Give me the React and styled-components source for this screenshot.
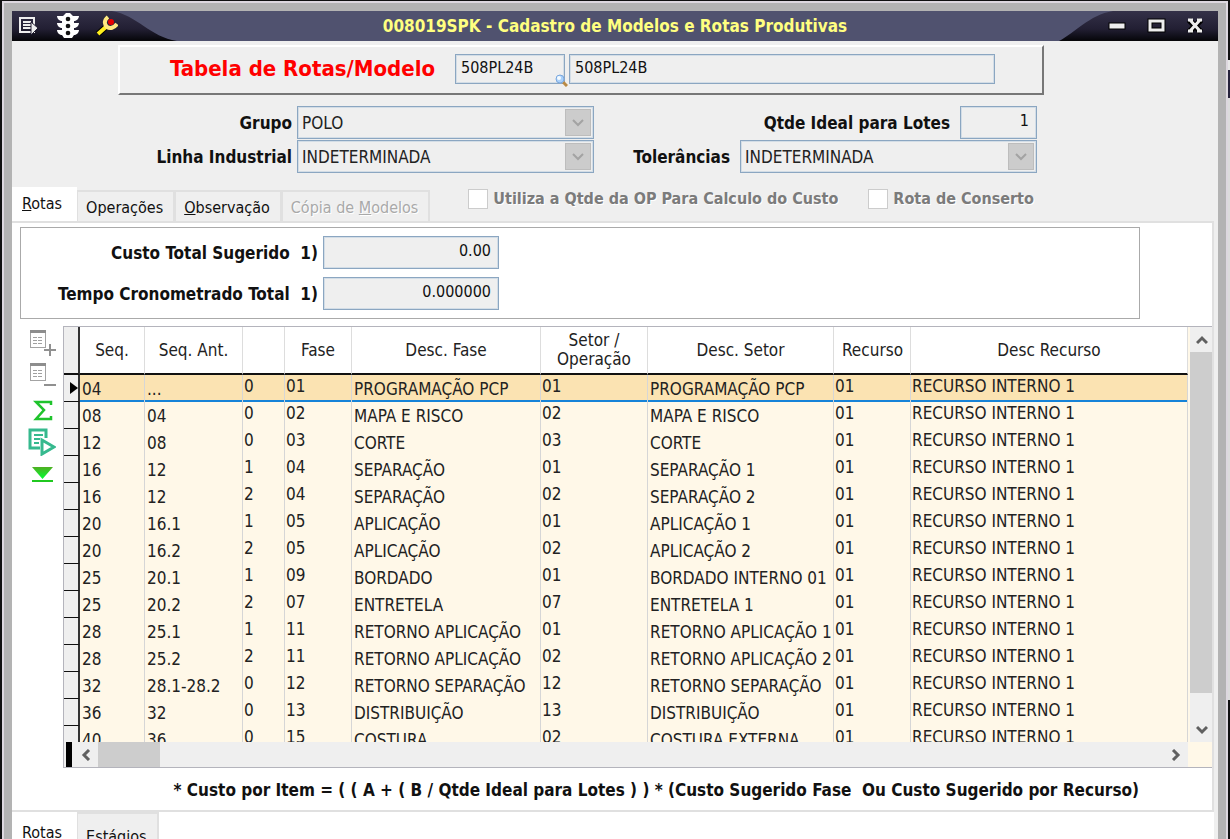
import styled, { createGlobalStyle, css } from "styled-components";

const FONT = `"DejaVu Sans Condensed", "DejaVu Sans", Tahoma, sans-serif`;

const columns = [
  { key: "seq", title: "Seq.", width: 65, low: true },
  { key: "ant", title: "Seq. Ant.", width: 98, low: true },
  { key: "alt", title: "", width: 42 },
  { key: "fase", title: "Fase", width: 67 },
  { key: "descFase", title: "Desc. Fase", width: 189, low: true },
  { key: "setor", title: "Setor / Operação", width: 107 },
  { key: "descSetor", title: "Desc. Setor", width: 186, low: true },
  { key: "recurso", title: "Recurso", width: 77 },
  { key: "descRecurso", title: "Desc Recurso" },
];

const rows = [
  ["04", "...", "0", "01", "PROGRAMAÇÃO PCP", "01", "PROGRAMAÇÃO PCP"],
  ["08", "04", "0", "02", "MAPA E RISCO", "02", "MAPA E RISCO"],
  ["12", "08", "0", "03", "CORTE", "03", "CORTE"],
  ["16", "12", "1", "04", "SEPARAÇÃO", "01", "SEPARAÇÃO 1"],
  ["16", "12", "2", "04", "SEPARAÇÃO", "02", "SEPARAÇÃO 2"],
  ["20", "16.1", "1", "05", "APLICAÇÃO", "01", "APLICAÇÃO 1"],
  ["20", "16.2", "2", "05", "APLICAÇÃO", "02", "APLICAÇÃO 2"],
  ["25", "20.1", "1", "09", "BORDADO", "01", "BORDADO INTERNO 01"],
  ["25", "20.2", "2", "07", "ENTRETELA", "07", "ENTRETELA 1"],
  ["28", "25.1", "1", "11", "RETORNO APLICAÇÃO", "01", "RETORNO APLICAÇÃO 1"],
  ["28", "25.2", "2", "11", "RETORNO APLICAÇÃO", "02", "RETORNO APLICAÇÃO 2"],
  ["32", "28.1-28.2", "0", "12", "RETORNO SEPARAÇÃO", "12", "RETORNO SEPARAÇÃO"],
  ["36", "32", "0", "13", "DISTRIBUIÇÃO", "13", "DISTRIBUIÇÃO"],
  ["40", "36", "0", "15", "COSTURA", "02", "COSTURA EXTERNA"],
].map((row) => [...row, "01", "RECURSO INTERNO 1"]);

const App = () => {
  return (
    <>
      <GlobalStyle />
      <Desktop>
        <Window>
          <TitleBar>
            <TitleTools>
              <TitleButton aria-label="Menu"><MenuIcon /></TitleButton>
              <TitleButton aria-label="Semáforo"><TrafficIcon /></TitleButton>
              <TitleButton aria-label="Ferramentas"><WrenchIcon /></TitleButton>
            </TitleTools>
            <Title>008019SPK - Cadastro de Modelos e Rotas Produtivas</Title>
            <WindowControls>
              <TitleButton aria-label="Minimizar">
                <svg width="20" height="20"><rect x="2" y="7" width="16" height="6" fill="#eee" stroke="#000" /></svg>
              </TitleButton>
              <TitleButton aria-label="Maximizar">
                <svg width="20" height="20">
                  <rect x="4" y="5" width="13" height="9" fill="none" stroke="#000" strokeWidth="5" />
                  <rect x="4" y="5" width="13" height="9" fill="none" stroke="#eee" strokeWidth="3" />
                </svg>
              </TitleButton>
              <TitleButton aria-label="Fechar">
                <svg width="20" height="20">
                  <path d="M4 4L16 16M16 4L4 16" stroke="#000" strokeWidth="6" />
                  <path d="M5 4L15 15M15 4L5 15M3 4H8M12 4H17M3 15H8M12 15H17" stroke="#eee" strokeWidth="3" />
                </svg>
              </TitleButton>
            </WindowControls>
          </TitleBar>

          <ModelPanel>
            <ModelLabel htmlFor="modelo">Tabela de Rotas/Modelo</ModelLabel>
            <Lookup>
              <Field id="modelo" $width={110} $height={30} defaultValue="508PL24B" readOnly />
              <LookupButton aria-label="Pesquisar"><SearchIcon /></LookupButton>
            </Lookup>
            <Field aria-label="Descrição do modelo" $width={426} $height={30} defaultValue="508PL24B" readOnly />
          </ModelPanel>

          <Form>
            <FormRow>
              <FieldLabel htmlFor="grupo" $width={280}>Grupo</FieldLabel>
              <DropDown id="grupo" value="POLO" />
              <RightGroup>
                <FieldLabel htmlFor="qtde">Qtde Ideal para Lotes</FieldLabel>
                <Field id="qtde" $width={77} $height={33} $right defaultValue="1" readOnly />
              </RightGroup>
            </FormRow>
            <FormRow>
              <FieldLabel htmlFor="linha" $width={280}>Linha Industrial</FieldLabel>
              <DropDown id="linha" value="INDETERMINADA" />
              <RightGroup>
                <FieldLabel htmlFor="tolerancias">Tolerâncias</FieldLabel>
                <DropDown id="tolerancias" value="INDETERMINADA" />
              </RightGroup>
            </FormRow>
          </Form>

          <TabStrip>
            <Tab $active><u>R</u>otas</Tab>
            <Tab>Operações</Tab>
            <Tab><u>O</u>bservação</Tab>
            <Tab disabled>Cópia de <u>M</u>odelos</Tab>
            <Options>
              <Option>
                <CheckBox type="checkbox" disabled />
                Utiliza a Qtde da OP Para Calculo do Custo
              </Option>
              <Option>
                <CheckBox type="checkbox" disabled />
                Rota de Conserto
              </Option>
            </Options>
          </TabStrip>

          <TabPage>
            <Totals>
              <FormRow>
                <FieldLabel htmlFor="custo" $width={297}>Custo Total Sugerido&nbsp; 1)</FieldLabel>
                <Field id="custo" $width={176} $height={33} $right defaultValue="0.00" readOnly />
              </FormRow>
              <FormRow>
                <FieldLabel htmlFor="tempo" $width={297}>Tempo Cronometrado Total&nbsp; 1)</FieldLabel>
                <Field id="tempo" $width={176} $height={33} $right defaultValue="0.000000" readOnly />
              </FormRow>
            </Totals>
            <Workspace>
              <SideBar>
                <SideButton aria-label="Incluir"><SheetIcon add /></SideButton>
                <SideButton aria-label="Excluir"><SheetIcon /></SideButton>
                <SideButton aria-label="Totalizar"><SumIcon /></SideButton>
                <SideButton aria-label="Executar"><RunIcon /></SideButton>
                <SideButton aria-label="Baixar"><DownIcon /></SideButton>
              </SideBar>
              <GridBox>
                <GridView>
                  <Table>
                    <colgroup>
                      <col width="16" />
                      {columns.map((c) => <col key={c.key} width={c.width} />)}
                    </colgroup>
                    <thead>
                      <tr>
                        <Gutter $head />
                        {columns.map((c) => <HeadCell key={c.key}>{c.title}</HeadCell>)}
                      </tr>
                    </thead>
                    <tbody>
                      {rows.map((row, i) => (
                        <Row key={i} $selected={i === 0}>
                          <Gutter>{i === 0 && <MarkerIcon />}</Gutter>
                          {row.map((text, j) => (
                            <Cell key={columns[j].key} $low={columns[j].low}>{text}</Cell>
                          ))}
                        </Row>
                      ))}
                    </tbody>
                  </Table>
                </GridView>
                <VScroll>
                  <ScrollButton aria-label="Subir"><Chevron d="M1 9L6 4L11 9" /></ScrollButton>
                  <VThumb />
                  <ScrollButton aria-label="Descer"><Chevron d="M1 3L6 8L11 3" /></ScrollButton>
                </VScroll>
                <HScroll>
                  <Splitter />
                  <ScrollButton aria-label="Esquerda"><Chevron d="M9 1L4 6L9 11" /></ScrollButton>
                  <HThumb />
                  <ScrollButton aria-label="Direita"><Chevron d="M3 1L8 6L3 11" /></ScrollButton>
                </HScroll>
              </GridBox>
            </Workspace>
            <Formula>
              * Custo por Item = ( ( A + ( B / Qtde Ideal para Lotes ) ) * (Custo Sugerido Fase&nbsp; Ou Custo Sugerido por Recurso)
            </Formula>
          </TabPage>

          <BottomTabs>
            <Tab $active $tall>Rotas</Tab>
            <Tab $tall>Estágios</Tab>
          </BottomTabs>
        </Window>
      </Desktop>
    </>
  );
};

export default App;

const DropDown = ({ id, value }) => (
  <SelectBox>
    <Select id={id} disabled defaultValue={value}>
      <option>{value}</option>
    </Select>
    <SelectArrow>
      <svg width="14" height="10"><path d="M2 2L7 7L12 2" fill="none" stroke="#a3a3a3" strokeWidth="2" /></svg>
    </SelectArrow>
  </SelectBox>
);

const Chevron = ({ d }) => (
  <svg width="12" height="12"><path d={d} fill="none" stroke="#606060" strokeWidth="3" /></svg>
);

const MenuIcon = () => (
  <svg width="22" height="22" viewBox="0 0 22 22">
    <rect x="2" y="3" width="14" height="14" fill="none" stroke="#eee" strokeWidth="2" />
    <path d="M5 7H13M5 10H13M5 13H13" stroke="#eee" strokeWidth="2" />
    <path d="M13 7L20 13L13 20Z" fill="#eee" stroke="#221f33" />
  </svg>
);

const TrafficIcon = () => (
  <svg width="24" height="26" viewBox="0 0 24 26">
    <path
      d="M7 3L10 0H14L17 3H23C23 6 20 8 18 8V10H23C23 13 20 15 18 15V17H23C23 20 20 22 18 22L16 25H8L6 22C4 22 1 20 1 17H6V15C4 15 1 13 1 10H6V8C4 8 1 6 1 3Z"
      fill="#fff"
    />
    <circle cx="12" cy="6" r="2.3" fill="#111" />
    <circle cx="12" cy="13" r="2.3" fill="#111" />
    <circle cx="12" cy="20" r="2.3" fill="#111" />
  </svg>
);

const WrenchIcon = () => (
  <svg width="22" height="22" viewBox="0 0 22 22">
    <path d="M2 19L11 11" stroke="#000" strokeWidth="6" />
    <path d="M2 19L11 11" stroke="#ffef1c" strokeWidth="4" />
    <path d="M12 2C8 5 8 9 11 12C14 14 18 13 21 9" fill="none" stroke="#ffe980" strokeWidth="4" />
    <circle cx="15" cy="7" r="3" fill="#e80000" />
  </svg>
);

const SearchIcon = () => (
  <svg width="13" height="13" viewBox="0 0 13 13">
    <path d="M8 8L12 12" stroke="#b98a45" strokeWidth="3" />
    <circle cx="5" cy="5" r="4" fill="#a9d0fa" stroke="#7aa7dd" />
    <circle cx="4" cy="4" r="2" fill="#f4fbff" />
  </svg>
);

const SheetIcon = ({ add }) => (
  <svg width="28" height="28" viewBox="0 0 28 28">
    <rect x="2.5" y="1.5" width="15" height="17" fill="#fff" stroke="#a3a3a3" />
    <path d="M2 2.5H18" stroke="#8d8d8d" strokeWidth="3" />
    <path d="M5 8.5H15M5 11.5H15M5 14.5H15" stroke="#a0a0a0" strokeDasharray="4 1" />
    <path d={add ? "M16 21H28M22 15V27" : "M16 23H28"} stroke="#909090" strokeWidth="2" />
  </svg>
);

const SumIcon = () => (
  <svg width="28" height="28" viewBox="0 0 28 28">
    <path d="M23 10V7H8L16 15L8 24H23V21" fill="none" stroke="#1fc32c" strokeWidth="2.5" />
  </svg>
);

const RunIcon = () => (
  <svg width="28" height="28" viewBox="0 0 28 28">
    <path d="M12 20H2V2H18V10" fill="none" stroke="#36b98e" strokeWidth="3" />
    <path d="M6 7H15M6 11H12M6 15H11" stroke="#36b98e" strokeWidth="2" />
    <path d="M14 12L26 19L14 26Z" fill="#fff" stroke="#36b98e" strokeWidth="3" />
  </svg>
);

const DownIcon = () => (
  <svg width="28" height="28" viewBox="0 0 28 28">
    <defs>
      <linearGradient id="down" x2="0" y2="1">
        <stop offset="0" stopColor="#4fae22" />
        <stop offset="1" stopColor="#00ff30" />
      </linearGradient>
    </defs>
    <path d="M4 6H25L14.5 18Z" fill="url(#down)" />
    <path d="M4 20H25" stroke="#20c820" strokeWidth="2" />
  </svg>
);

const MarkerIcon = () => (
  <svg width="8" height="12"><path d="M0 0L8 6L0 12Z" fill="#000" /></svg>
);

const GlobalStyle = createGlobalStyle`
  *, *::before, *::after { box-sizing: border-box; }
  body {
    margin: 0;
    overflow: hidden;
    background: #555;
    color: #111;
    font: 16px/20px ${FONT};
  }
  button, input, select { font: inherit; color: inherit; }
  button { padding: 0; border: 0; background: none; }
  svg { display: block; }
`;

const Desktop = styled.div`
  display: flex;
  height: 100vh;
  overflow: hidden;
  padding: 1px 3px 0 1px;
  background:
    linear-gradient(#111, #111) left / 50% 100% no-repeat,
    linear-gradient(#111 60px, #e8e8e8 60px, #e8e8e8 70px, #26233c 70px, #26233c 98px, #dcdcdc 98px, #dcdcdc 700px, #111 700px);
`;

const Window = styled.main`
  flex: 1;
  display: flex;
  flex-direction: column;
  min-width: 0;
  border: 8px solid #b3b3b3;
  border-bottom: 0;
  background: #efefef;
  outline: 2px solid #ddd8df;
  margin: 2px 1px 0 3px;

  > * {
    flex-shrink: 0;
  }
`;

const TitleBar = styled.header`
  display: flex;
  align-items: stretch;
  justify-content: space-between;
  height: 30px;
  background: #50526f;
`;

const TitleTools = styled.div`
  display: flex;
  align-items: center;
  gap: 16px;
  width: 165px;
  padding-left: 6px;
  background: linear-gradient(#343148, #221f33 60%, #050508);
  clip-path: path("M0 0H100C125 4 138 26 165 30H0Z");
`;

const WindowControls = styled.div`
  display: flex;
  align-items: center;
  justify-content: flex-end;
  gap: 19px;
  width: 165px;
  padding-right: 13px;
  background: linear-gradient(#343148, #221f33 60%, #050508);
  clip-path: path("M165 0H60C36 4 22 22 6 30H165Z");
`;

const TitleButton = styled.button`
  flex-shrink: 0;
`;

const Title = styled.h1`
  margin: 0;
  color: #ffff80;
  font-size: 17px;
  line-height: 30px;
`;

const ModelPanel = styled.section`
  display: flex;
  align-items: center;
  gap: 4px;
  width: 926px;
  height: 50px;
  margin: 4px 0 0 106px;
  padding: 0 0 2px 50px;
  border: 2px solid #fff;
  border-right-color: #777;
  border-bottom-color: #777;
`;

const ModelLabel = styled.label`
  width: 281px;
  color: #f00;
  font-size: 22px;
  font-weight: bold;
`;

const Lookup = styled.div`
  position: relative;
`;

const LookupButton = styled.button`
  position: absolute;
  right: -3px;
  bottom: -3px;
`;

const sunken = css`
  border: 1px solid #8ba6c1;
  border-radius: 0;
  background: #efefef;
  box-shadow: inset 0 0 0 1px #d3dde6;
`;

const Field = styled.input`
  display: block;
  width: ${(p) => p.$width}px;
  height: ${(p) => p.$height}px;
  padding: 0 7px 4px 5px;
  ${sunken}
  text-align: ${(p) => (p.$right ? "right" : "left")};
  outline: none;
`;

const Form = styled.section`
  display: flex;
  flex-direction: column;
  gap: 1px;
  width: 1025px;
  margin-top: 11px;
`;

const FormRow = styled.div`
  display: flex;
  align-items: center;
  gap: 5px;
`;

const RightGroup = styled.div`
  display: flex;
  flex: 1;
  align-items: center;
  justify-content: flex-end;
  gap: 10px;
`;

const FieldLabel = styled.label`
  width: ${(p) => (p.$width ? p.$width + "px" : "auto")};
  font-size: 17px;
  font-weight: bold;
  text-align: right;
`;

const SelectBox = styled.div`
  position: relative;
  width: 297px;
`;

const Select = styled.select`
  display: block;
  width: 100%;
  height: 33px;
  padding: 0 30px 0 4px;
  ${sunken}
  color: #222;
  font-size: 17px;
  opacity: 1;
  appearance: none;
`;

const SelectArrow = styled.span`
  position: absolute;
  top: 3px;
  right: 3px;
  display: grid;
  place-items: center;
  width: 26px;
  height: 27px;
  border: 1px solid #bdbdbd;
  background: #ccc;
  pointer-events: none;
`;

const TabStrip = styled.nav`
  display: flex;
  align-items: flex-end;
  height: 34px;
  margin-top: 14px;
`;

const Tab = styled.button`
  height: ${(p) => (p.$tall ? 46 : 31)}px;
  padding: 2px 10px 0 8px;
  border: 2px solid #e0e0e0;
  border-left-width: 1px;
  border-bottom: 0;
  background: #efefef;
  white-space: nowrap;

  &:disabled {
    color: #a9a9a9;
    text-shadow: 1px 1px 0 #fff;
  }

  ${(p) =>
    p.$active &&
    css`
      height: ${p.$tall ? 46 : 34}px;
      padding: 0 13px ${p.$tall ? 6 : 2}px 9px;
      border-color: #fff;
      background: #fff;
    `}
`;

const Options = styled.div`
  display: flex;
  align-self: flex-start;
  gap: 30px;
  margin-left: 38px;
`;

const Option = styled.label`
  display: flex;
  align-items: center;
  gap: 5px;
  height: 24px;
  color: #7b7b7b;
  font-weight: bold;
  text-shadow: 1px 1px 0 #fff;
`;

const CheckBox = styled.input`
  width: 20px;
  height: 20px;
  margin: 0;
  border: 1px solid #ccc;
  background: #fff;
  appearance: none;
`;

const TabPage = styled.section`
  margin-right: 4px;
  padding: 4px 0 0 8px;
  border: 2px solid #e0e0e0;
  border-left: 0;
  background: #fff;
`;

const Totals = styled.div`
  display: flex;
  flex-direction: column;
  justify-content: center;
  gap: 8px;
  height: 92px;
  margin-right: 72px;
  border: 1px solid #aaa;
`;

const Workspace = styled.div`
  display: flex;
  gap: 7px;
  margin-top: 7px;
`;

const SideBar = styled.div`
  display: flex;
  flex-direction: column;
  gap: 5px;
  width: 36px;
  padding: 3px 0 0 8px;
`;

const SideButton = styled.button`
  width: 28px;
  height: 28px;
`;

const GridBox = styled.div`
  display: grid;
  flex: 1;
  grid-template-columns: 1fr 24px;
  grid-template-rows: 415px 25px;
  min-width: 0;
  border: 1px solid #b4b4bc;
  border-right: 0;
  background: #fff8e8;
`;

const GridView = styled.div`
  overflow: hidden;
`;

const Table = styled.table`
  width: 100%;
  table-layout: fixed;
  border-collapse: separate;
  border-spacing: 0;
  font-size: 17px;
`;

const HeadCell = styled.th`
  height: 48px;
  padding: 0 8px;
  border-right: 1px solid #ddd;
  border-bottom: 2px solid #111;
  background: #fff;
  font-weight: normal;
  line-height: 19px;
  color: #222;
`;

const Gutter = styled.td`
  height: 27px;
  padding: 0 0 0 6px;
  border-right: 2px solid #333;
  border-bottom: ${(p) => (p.$head ? 2 : 1)}px solid #111;
  background: #efefef;
`;

const Cell = styled.td`
  height: 27px;
  padding: ${(p) => (p.$low ? "1px 0 0 2px" : "0 0 5px 1px")};
  border-right: 1px solid #d6d6d6;
  color: #222;
  line-height: 20px;
  white-space: nowrap;
`;

const Row = styled.tr`
  ${(p) =>
    p.$selected &&
    css`
      ${Cell} {
        background: #fbe3b2;
        box-shadow: inset 0 -2px 0 #1683d8;
      }
    `}
`;

const VScroll = styled.div`
  display: flex;
  flex-direction: column;
  margin-left: 2px;
  background: #efefef;
`;

const HScroll = styled.div`
  display: flex;
  background: #efefef;
`;

const ScrollButton = styled.button`
  display: grid;
  flex-shrink: 0;
  place-items: center;
  width: 24px;
  height: 25px;
`;

const VThumb = styled.div`
  height: 341px;
  margin-bottom: auto;
  background: #cdcdcd;
`;

const HThumb = styled.div`
  width: 62px;
  margin-right: auto;
  background: #cdcdcd;
`;

const Splitter = styled.div`
  width: 6px;
  margin: 0 2px;
  background: #000;
`;

const Formula = styled.p`
  margin: 12px 73px 10px 0;
  font-size: 17px;
  font-weight: bold;
  text-align: right;
`;

const BottomTabs = styled.nav`
  display: flex;
  flex: 1;
  margin-right: 4px;
  background: #fff;
`;
